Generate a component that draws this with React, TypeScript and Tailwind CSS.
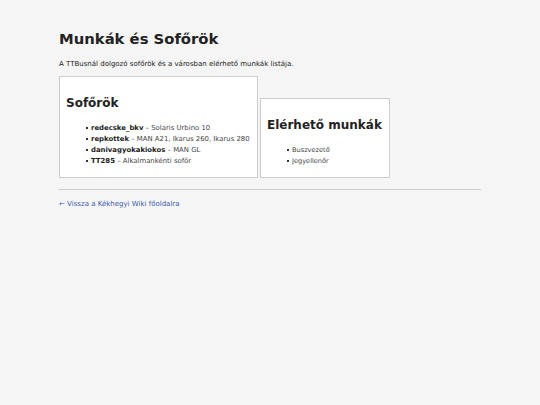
import React from 'react';

const drivers = [
  { name: 'redecske_bkv', bus: 'Solaris Urbino 10' },
  { name: 'repkottek', bus: 'MAN A21, Ikarus 260, Ikarus 280' },
  { name: 'danivagyokakiokos', bus: 'MAN GL' },
  { name: 'TT285', bus: 'Alkalmankénti sofőr' },
];

const jobs = ['Buszvezető', 'Jegyellenőr'];

const Bullet = () => <span className="mr-[3px] inline-block h-[2px] w-[2px] shrink-0 bg-[#333] align-middle" />;

export default function App() {
  return (
    <div className="min-h-[405px] w-[540px] bg-[#f5f5f5] text-[#222] font-['DejaVu_Sans',sans-serif]">
      <div className="mx-[59px] pt-[30px]">
        {/* Header */}
        <h1 className="text-[14.8px] font-bold leading-[18px]">Munkák és Sofőrök</h1>
        <p className="mt-[12px] text-[7px] leading-[9px]">
          A TTBusnál dolgozó sofőrök és a városban elérhető munkák listája.
        </p>

        {/* Boxes */}
        <div className="mt-[7px] flex items-end gap-[2px]">
          <div className="w-[199px] border border-[#ccc] bg-white px-[6px] pt-[19px] pb-[10px]">
            <h2 className="text-[12px] font-bold leading-[15px]">Sofőrök</h2>
            <ul className="mt-[12px] pl-[20px] text-[6.9px] leading-[11px] text-[#444]">
              {drivers.map((d) => (
                <li key={d.name} className="whitespace-nowrap">
                  <Bullet />
                  <b className="text-[#222]">{d.name}</b> – {d.bus}
                </li>
              ))}
            </ul>
          </div>
          <div className="w-[130px] border border-[#ccc] bg-white px-[6px] pt-[19px] pb-[10px]">
            <h2 className="text-[12px] font-bold leading-[15px]">Elérhető munkák</h2>
            <ul className="mt-[12px] pl-[20px] text-[6.6px] leading-[11px] text-[#444]">
              {jobs.map((j) => (
                <li key={j}>
                  <Bullet />
                  {j}
                </li>
              ))}
            </ul>
          </div>
        </div>

        <hr className="mt-[11px] border-t border-[#ccc]" />
        <a href="#" className="mt-[10px] block text-[7px] leading-[9px] text-[#3a5ba8]">
          ← Vissza a Kékhegyi Wiki főoldalra
        </a>
      </div>
    </div>
  );
}
